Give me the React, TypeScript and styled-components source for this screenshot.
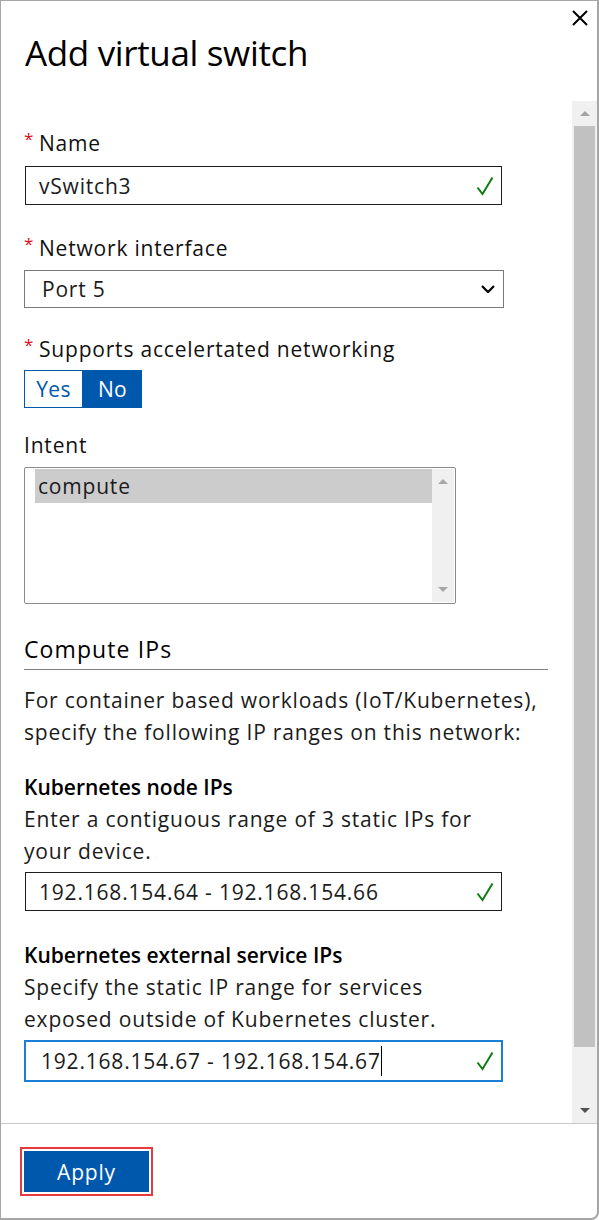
import styled, { createGlobalStyle } from "styled-components";

const GlobalStyle = createGlobalStyle`
  html, body {
    margin: 0;
    padding: 0;
    background: #fff;
  }
  body {
    font-family: "Open Sans", "Noto Sans", sans-serif;
    font-size: 21px;
    letter-spacing: 0.8px;
    color: #1b1b1b;
  }
  * {
    box-sizing: border-box;
  }
`;

const BLUE = "#0058ad";
const GREEN = "#107c10";

const Panel = styled.div`
  width: 599px;
  height: 1220px;
  display: flex;
  flex-direction: column;
  background: #fff;
  border: 1px solid #a6a6a6;
  border-right-width: 2px;
  border-bottom-width: 2px;
  border-bottom-right-radius: 8px;
  overflow: hidden;
`;

const Header = styled.header`
  height: 100px;
  flex: none;
  display: flex;
  justify-content: space-between;
  align-items: flex-start;
  padding: 0 9px 0 24px;
`;

const Title = styled.h1`
  margin: 30px 0 0;
  font-size: 35px;
  line-height: 44px;
  font-weight: 400;
  letter-spacing: -0.35px;
  color: #000;
`;

const CloseButton = styled.button`
  width: 16px;
  height: 16px;
  margin-top: 9px;
  padding: 0;
  border: 0;
  background: none;
  display: flex;
`;

const Body = styled.div`
  height: 1022px;
  flex: none;
  display: flex;
`;

const Content = styled.div`
  flex: 1;
  padding: 0 24px 0 23px;
  overflow: hidden;
`;

const Scrollbar = styled.div`
  width: 25px;
  flex: none;
  background: #f0f0f0;
  display: flex;
  flex-direction: column;
  align-items: center;
`;

const ArrowCell = styled.div`
  height: 25px;
  width: 100%;
  display: flex;
  align-items: center;
  justify-content: center;
`;

const Arrow = styled.span<{ $dir: "up" | "down"; $color: string; $size?: number }>`
  width: 0;
  height: 0;
  border-left: ${(p) => p.$size ?? 5}px solid transparent;
  border-right: ${(p) => p.$size ?? 5}px solid transparent;
  ${(p) =>
    p.$dir === "up"
      ? `border-bottom: ${p.$size ?? 5}px solid ${p.$color};`
      : `border-top: ${p.$size ?? 5}px solid ${p.$color};`}
`;

const Thumb = styled.div`
  width: 21px;
  height: 921px;
  background: #c1c1c1;
`;

const Track = styled.div`
  flex: 1;
`;

const Label = styled.div<{ $gap: number }>`
  margin-top: ${(p) => p.$gap}px;
  line-height: 28px;
  display: flex;
  align-items: flex-start;
  color: #111;
`;

const Star = styled.span`
  color: #e00b1c;
  font-size: 17px;
  line-height: 20px;
  width: 15px;
  flex: none;
  letter-spacing: 0;
`;

const TextBox = styled.div<{ $focused?: boolean; $gap?: number }>`
  width: ${(p) => (p.$focused ? 479 : 477)}px;
  height: ${(p) => (p.$focused ? 42 : 39)}px;
  margin: ${(p) => (p.$focused ? `${p.$gap ?? 6}px 0 0 0` : `${p.$gap ?? 9}px 0 0 1px`)};
  border: ${(p) => (p.$focused ? `2px solid #1a7fd6` : "1px solid #1e1e1e")};
  display: flex;
  align-items: center;
  padding: ${(p) => (p.$focused ? "0 7px 0 15px" : "0 7px 0 13px")};
`;

const Value = styled.span`
  flex: 1;
  display: flex;
  align-items: center;
`;

const Caret = styled.span`
  display: inline-block;
  width: 1px;
  height: 30px;
  background: #000;
`;

const Select = styled.div`
  width: 480px;
  height: 38px;
  margin-top: 8px;
  border: 1px solid #7a7a7a;
  display: flex;
  align-items: center;
  justify-content: space-between;
  padding: 0 8px 0 17px;
`;

const Toggle = styled.div`
  margin-top: 7px;
  display: flex;
  width: 118px;
  height: 38px;
`;

const ToggleOption = styled.div<{ $active?: boolean }>`
  flex: 1;
  display: flex;
  align-items: center;
  justify-content: center;
  letter-spacing: 0.3px;
  border: 1px solid ${BLUE};
  background: ${(p) => (p.$active ? BLUE : "#fff")};
  color: ${(p) => (p.$active ? "#fff" : BLUE)};
`;

const ListBox = styled.div`
  width: 432px;
  height: 137px;
  margin-top: 8px;
  border: 1px solid #8a8a8a;
  border-radius: 2px;
  display: flex;
  padding: 1px 1px 1px 10px;
`;

const ListItems = styled.div`
  flex: 1;
`;

const ListItem = styled.div<{ $selected?: boolean }>`
  height: 34px;
  display: flex;
  align-items: center;
  padding-left: 3px;
  background: ${(p) => (p.$selected ? "#cccccc" : "transparent")};
`;

const ListScroll = styled.div`
  width: 22px;
  background: #f0f0f0;
  display: flex;
  flex-direction: column;
  justify-content: space-between;
  align-items: center;
  padding: 10px 0;
`;

const SectionTitle = styled.h2`
  margin: 30px 0 0;
  padding-bottom: 5px;
  font-size: 23px;
  line-height: 30px;
  font-weight: 400;
  letter-spacing: 1.1px;
  color: #000;
  border-bottom: 1px solid #808080;
`;

const Paragraph = styled.p<{ $gap: number; $narrow?: boolean }>`
  margin: ${(p) => p.$gap}px 0 0;
  line-height: 32px;
  max-width: ${(p) => (p.$narrow ? "480px" : "none")};
`;

const SubHeading = styled.div`
  font-weight: 600;
  letter-spacing: 0;
  color: #000;
`;

const Footer = styled.footer`
  flex: 1;
  border-top: 1px solid #c8c8c8;
  padding: 23px 0 0 19px;
`;

const ApplyButton = styled.button`
  width: 133px;
  height: 49px;
  border: 2px solid #e8393f;
  padding: 2px;
  background: #fff;
  display: flex;
`;

const ApplyInner = styled.span`
  flex: 1;
  background: ${BLUE};
  color: #fff;
  font-family: "Open Sans", "Noto Sans", sans-serif;
  font-size: 21px;
  letter-spacing: 0.8px;
  display: flex;
  align-items: center;
  justify-content: center;
`;

const Check = () => (
  <svg width="18" height="20" viewBox="0 0 18 20">
    <path d="M1.5 11.5 L6.5 18 L16.5 1.5" fill="none" stroke={GREEN} strokeWidth="2" />
  </svg>
);

const Chevron = () => (
  <svg width="14" height="8" viewBox="0 0 14 8">
    <path d="M1 1 L7 7 L13 1" fill="none" stroke="#000" strokeWidth="2.2" />
  </svg>
);

const CloseIcon = () => (
  <svg width="16" height="16" viewBox="0 0 16 16">
    <path d="M1 1 L15 15 M15 1 L1 15" stroke="#000" strokeWidth="2" />
  </svg>
);

const App = () => {
  return (
    <>
      <GlobalStyle />
      <Panel>
        <Header>
          <Title>Add virtual switch</Title>
          <CloseButton aria-label="Close">
            <CloseIcon />
          </CloseButton>
        </Header>
        <Body>
          <Content>
            <Label $gap={28}>
              <Star>*</Star>Name
            </Label>
            <TextBox>
              <Value>vSwitch3</Value>
              <Check />
            </TextBox>

            <Label $gap={29}>
              <Star>*</Star>Network interface
            </Label>
            <Select>
              <span>Port 5</span>
              <Chevron />
            </Select>

            <Label $gap={27}>
              <Star>*</Star>Supports accelertated networking
            </Label>
            <Toggle>
              <ToggleOption>Yes</ToggleOption>
              <ToggleOption $active>No</ToggleOption>
            </Toggle>

            <Label $gap={23}>Intent</Label>
            <ListBox>
              <ListItems>
                <ListItem $selected>compute</ListItem>
              </ListItems>
              <ListScroll>
                <Arrow $dir="up" $color="#a8a8a8" $size={5} />
                <Arrow $dir="down" $color="#a8a8a8" $size={5} />
              </ListScroll>
            </ListBox>

            <SectionTitle>Compute IPs</SectionTitle>
            <Paragraph $gap={14}>
              For container based workloads (IoT/Kubernetes), specify the following IP ranges on
              this network:
            </Paragraph>

            <Paragraph $gap={23} $narrow>
              <SubHeading>Kubernetes node IPs</SubHeading>
              Enter a contiguous range of 3 static IPs for your device.
            </Paragraph>
            <TextBox $gap={5}>
              <Value>192.168.154.64 - 192.168.154.66</Value>
              <Check />
            </TextBox>

            <Paragraph $gap={28} $narrow>
              <SubHeading>Kubernetes external service IPs</SubHeading>
              Specify the static IP range for services exposed outside of Kubernetes cluster.
            </Paragraph>
            <TextBox $focused $gap={5}>
              <Value>
                192.168.154.67 - 192.168.154.67
                <Caret />
              </Value>
              <Check />
            </TextBox>
          </Content>
          <Scrollbar>
            <ArrowCell>
              <Arrow $dir="up" $color="#a3a3a3" $size={5} />
            </ArrowCell>
            <Thumb />
            <Track />
            <ArrowCell>
              <Arrow $dir="down" $color="#505050" $size={5} />
            </ArrowCell>
          </Scrollbar>
        </Body>
        <Footer>
          <ApplyButton>
            <ApplyInner>Apply</ApplyInner>
          </ApplyButton>
        </Footer>
      </Panel>
    </>
  );
};

export default App;
